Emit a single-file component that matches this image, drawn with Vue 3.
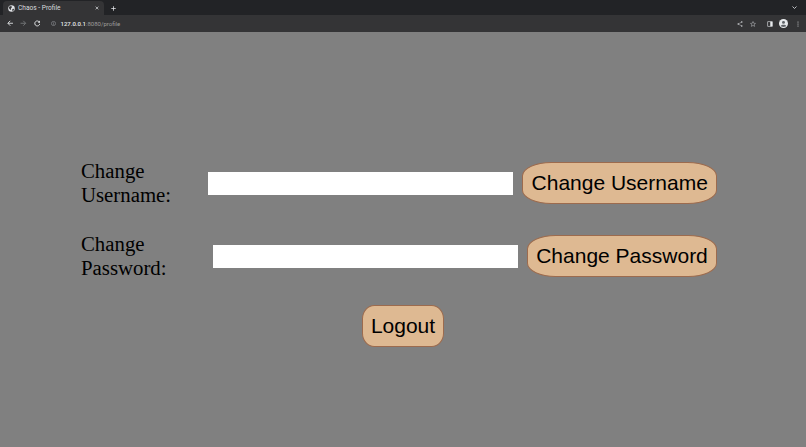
<template>
	<div class="page">
		<!-- browser chrome -->
		<div class="tabstrip">
			<div class="tab">
				<svg class="favicon" viewBox="0 0 16 16">
					<circle cx="8" cy="8" r="7.5" fill="#dfe1e5" />
					<path d="M3 3.5 L7.5 2 L9 5 L6.5 8 L7 11.5 L4.5 10 L2 7 Z M10 9 L14 8.5 L12.5 13 L10 14 Z" fill="#343436" />
				</svg>
				<span class="tab-title">Chaos - Profile</span>
				<svg class="tab-close" viewBox="0 0 10 10">
					<path d="M1.5 1.5 L8.5 8.5 M8.5 1.5 L1.5 8.5" stroke="#e8eaed" stroke-width="1.6" />
				</svg>
			</div>
			<svg class="new-tab" viewBox="0 0 10 10">
				<path d="M5 .5 V9.5 M.5 5 H9.5" stroke="#e8eaed" stroke-width="1.5" />
			</svg>
			<svg class="tab-list" viewBox="0 0 10 6">
				<path d="M1 1 L5 5 L9 1" fill="none" stroke="#d0d2d6" stroke-width="1.8" />
			</svg>
		</div>
		<div class="toolbar">
			<svg class="nav" viewBox="0 0 12 12">
				<path d="M11 6 H2 M6 1.5 L1.5 6 L6 10.5" fill="none" stroke="#e8eaed" stroke-width="1.6" />
			</svg>
			<svg class="nav" viewBox="0 0 12 12">
				<path d="M1 6 H10 M6 1.5 L10.5 6 L6 10.5" fill="none" stroke="#7b7d80" stroke-width="1.6" />
			</svg>
			<svg class="nav" viewBox="0 0 12 12">
				<path d="M10 4 A4.6 4.6 0 1 0 10.6 7" fill="none" stroke="#e8eaed" stroke-width="1.7" />
				<path d="M11 1 V5 H7 Z" fill="#e8eaed" />
			</svg>
			<svg class="info" viewBox="0 0 12 12">
				<circle cx="6" cy="6" r="5" fill="none" stroke="#bdc1c6" stroke-width="1" />
				<path d="M6 5.2 V9 M6 3 V4.2" stroke="#bdc1c6" stroke-width="1" />
			</svg>
			<span class="url"><b>127.0.0.1</b>:8080/profile</span>
			<svg class="tool share" viewBox="0 0 12 12">
				<path d="M9.5 2 L2.5 6 L9.5 10" fill="none" stroke="#c4c7ca" stroke-width="1" />
				<circle cx="9.5" cy="2" r="1.6" fill="#c4c7ca" />
				<circle cx="2.5" cy="6" r="1.6" fill="#c4c7ca" />
				<circle cx="9.5" cy="10" r="1.6" fill="#c4c7ca" />
			</svg>
			<svg class="tool star" viewBox="0 0 12 12">
				<path d="M6 1 L7.5 4.5 L11 4.8 L8.3 7.2 L9.2 10.8 L6 8.8 L2.8 10.8 L3.7 7.2 L1 4.8 L4.5 4.5 Z" fill="none" stroke="#c4c7ca" stroke-width="1" />
			</svg>
			<svg class="tool panel" viewBox="0 0 12 12">
				<rect x="1.5" y="1.5" width="9" height="9" fill="none" stroke="#e8eaed" stroke-width="1.2" />
				<rect x="6.5" y="1.5" width="4" height="9" fill="#e8eaed" />
			</svg>
			<svg class="avatar" viewBox="0 0 16 16">
				<circle cx="8" cy="8" r="8" fill="#e8eaed" />
				<circle cx="8" cy="6" r="2.6" fill="#5f6368" />
				<path d="M3 12.5 C4 9.5 12 9.5 13 12.5 C11.5 14.5 4.5 14.5 3 12.5 Z" fill="#5f6368" />
			</svg>
			<svg class="menu" viewBox="0 0 4 12">
				<circle cx="2" cy="2" r="1" fill="#e8eaed" />
				<circle cx="2" cy="6" r="1" fill="#e8eaed" />
				<circle cx="2" cy="10" r="1" fill="#e8eaed" />
			</svg>
		</div>

		<!-- profile form -->
		<main class="content">
			<form class="row" @submit.prevent>
				<label class="label">Change Username:</label>
				<input class="field" type="text" />
				<button class="btn">Change Username</button>
			</form>
			<form class="row" @submit.prevent>
				<label class="label">Change Password:</label>
				<input class="field" type="password" />
				<button class="btn">Change Password</button>
			</form>
			<button class="btn logout">Logout</button>
		</main>
	</div>
</template>

<script setup>
</script>

<style>
html, body {
	margin: 0;
	background: #808080;
}
</style>

<style scoped>
.page {
	display: flex;
	flex-direction: column;
	width: 806px;
	height: 447px;
	overflow: hidden;
	background: #808080;
}

/* browser chrome */
.tabstrip {
	display: flex;
	align-items: flex-end;
	flex: none;
	height: 15px;
	padding-left: 3px;
	background: #222326;
}
.tab {
	display: flex;
	align-items: center;
	width: 101px;
	height: 14px;
	box-sizing: border-box;
	padding: 0 5px 0 5px;
	border-radius: 4px 4px 0 0;
	background: #343436;
}
.favicon {
	width: 7px;
	height: 7px;
	margin-right: 3px;
}
.tab-title {
	flex: 1;
	font: 6.6px Roboto, sans-serif;
	color: #d8dade;
	white-space: nowrap;
}
.tab-close {
	width: 4px;
	height: 4px;
}
.new-tab {
	width: 5px;
	height: 5px;
	margin: 0 0 4px 7px;
}
.tab-list {
	width: 5px;
	height: 3px;
	margin: 0 9px 6px auto;
}
.toolbar {
	display: flex;
	align-items: center;
	flex: none;
	height: 17px;
	padding-left: 6.5px;
	background: #343436;
}
.nav {
	width: 6.5px;
	height: 6.5px;
	margin-right: 7px;
}
.info {
	width: 5px;
	height: 5px;
	margin: 0 5px 0 3.5px;
}
.url {
	flex: 1;
	font: 6px Roboto, sans-serif;
	color: #9c9c9c;
	white-space: nowrap;
}
.url b {
	font-weight: 500;
	color: #e8eaed;
}
.tool {
	width: 6px;
	height: 6px;
}
.share {
	margin-right: 7px;
}
.star {
	margin-right: 11px;
}
.panel {
	margin-right: 6px;
}
.avatar {
	width: 9px;
	height: 9px;
	margin-right: 8.5px;
}
.menu {
	width: 2px;
	height: 6px;
	margin-right: 7.5px;
}

/* form */
.content {
	display: flex;
	flex-direction: column;
	align-items: center;
	gap: 25px;
	padding-top: 127px;
}
.row {
	display: flex;
	align-items: center;
	width: 636px;
	margin-right: 8px;
}
.label {
	flex: 1;
	min-width: 0;
	font: 20.8px/24px "Liberation Serif", serif;
	color: #000;
}
.field {
	width: 305px;
	height: 23px;
	box-sizing: border-box;
	margin-right: 9px;
	border: 0;
	padding: 0;
	background: #fff;
}
.btn {
	flex: none;
	height: 42px;
	box-sizing: border-box;
	padding: 0 8.2px;
	border: 1.2px solid #9c6b4e;
	border-radius: 15% / 33%;
	background: #deb992;
	font: 21px "Liberation Sans", Arial, sans-serif;
	color: #000;
}
.logout {
	width: 82px;
	padding: 0;
}
</style>
